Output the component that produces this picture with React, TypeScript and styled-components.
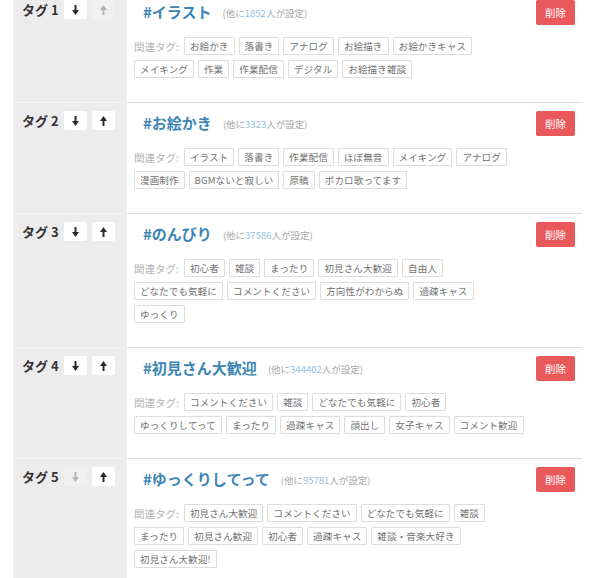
import styled, { createGlobalStyle } from 'styled-components';

const GlobalStyle = createGlobalStyle`
  html, body {
    margin: 0;
    padding: 0;
    background: #ffffff;
    overflow: hidden;
  }
  body {
    font-family: "Noto Sans CJK JP", "Liberation Sans", sans-serif;
    color: #333333;
  }
`;

type TagEntry = {
  name: string;
  count: number;
  related: string[][];
};

const TAGS: TagEntry[] = [
  {
    name: 'イラスト',
    count: 1852,
    related: [
      ['お絵かき', '落書き', 'アナログ', 'お絵描き', 'お絵かきキャス'],
      ['メイキング', '作業', '作業配信', 'デジタル', 'お絵描き雑談'],
    ],
  },
  {
    name: 'お絵かき',
    count: 3323,
    related: [
      ['イラスト', '落書き', '作業配信', 'ほぼ無音', 'メイキング', 'アナログ'],
      ['漫画制作', 'BGMないと寂しい', '原稿', 'ボカロ歌ってます'],
    ],
  },
  {
    name: 'のんびり',
    count: 37586,
    related: [
      ['初心者', '雑談', 'まったり', '初見さん大歓迎', '自由人'],
      ['どなたでも気軽に', 'コメントください', '方向性がわからぬ', '過疎キャス'],
      ['ゆっくり'],
    ],
  },
  {
    name: '初見さん大歓迎',
    count: 344402,
    related: [
      ['コメントください', '雑談', 'どなたでも気軽に', '初心者'],
      ['ゆっくりしてって', 'まったり', '過疎キャス', '顔出し', '女子キャス', 'コメント歓迎'],
    ],
  },
  {
    name: 'ゆっくりしてって',
    count: 95781,
    related: [
      ['初見さん大歓迎', 'コメントください', 'どなたでも気軽に', '雑談'],
      ['まったり', '初見さん歓迎', '初心者', '過疎キャス', '雑談・音楽大好き'],
      ['初見さん大歓迎!'],
    ],
  },
];

const List = styled.div`
  margin: -8px 18px 0 13px;
  display: flex;
  flex-direction: column;
`;

const Row = styled.div`
  display: grid;
  grid-template-columns: 114px minmax(0, 1fr);
`;

const Side = styled.div`
  background: #ececec;
  border-bottom: 1px solid #f4f4f4;
  padding: 8px 0 0 9px;
  display: flex;
  align-items: flex-start;
`;

const SideHead = styled.div`
  display: flex;
  align-items: center;
  height: 19px;
  gap: 5px;
`;

const TagNumber = styled.span`
  font-size: 13px;
  font-weight: 700;
  color: #333333;
  white-space: nowrap;
`;

const MoveButton = styled.button<{ $disabled?: boolean }>`
  width: 23px;
  height: 19px;
  padding: 0;
  border: none;
  border-radius: 2px;
  background: ${({ $disabled }) => ($disabled ? '#f0f0f0' : '#ffffff')};
  color: ${({ $disabled }) => ($disabled ? '#b4b4b4' : '#2b2b2b')};
  display: flex;
  align-items: center;
  justify-content: center;
`;

const Main = styled.div`
  border-bottom: 1px solid #dedede;
  padding: 8px 7px 24px 7px;
  display: grid;
  grid-template-columns: minmax(0, 1fr) 39px;
  column-gap: 13px;
  align-items: start;
`;

const Head = styled.div`
  display: flex;
  align-items: center;
  height: 23px;
  padding-left: 9px;
`;

const Title = styled.span`
  font-size: 15px;
  font-weight: 700;
  color: #3d86b3;
  white-space: nowrap;
`;

const Count = styled.span`
  margin-left: 11px;
  font-size: 9.5px;
  color: #a6a6a6;
  white-space: nowrap;
  padding-top: 2px;
`;

const CountNumber = styled.span`
  color: #93c1e2;
`;

const DeleteButton = styled.button`
  width: 39px;
  height: 25px;
  padding: 0;
  border: none;
  border-radius: 2px;
  background: #e9585a;
  color: #ffffff;
  font-family: inherit;
  font-size: 10.5px;
  line-height: 25px;
  grid-row: 1;
  grid-column: 2;
`;

const Related = styled.div`
  grid-column: 1 / span 2;
  margin-top: 12px;
  display: flex;
  flex-direction: column;
  gap: 5px;
`;

const RelatedLine = styled.div`
  display: flex;
  align-items: center;
  gap: 4px;
`;

const RelatedLabel = styled.span`
  font-size: 10.5px;
  color: #b3b3b3;
  white-space: nowrap;
  margin-right: 1px;
`;

const Chip = styled.span`
  height: 18px;
  box-sizing: border-box;
  padding: 0 5px;
  border: 1px solid #dddddd;
  border-radius: 1px;
  background: #ffffff;
  font-size: 9.5px;
  line-height: 16px;
  letter-spacing: 0.15px;
  color: #717171;
  white-space: nowrap;
`;

function Arrow({ up }: { up?: boolean }): JSX.Element {
  return (
    <svg
      width="7"
      height="10"
      viewBox="0 0 7 10"
      style={{ transform: up ? 'rotate(180deg)' : undefined }}
      aria-hidden="true"
    >
      <rect x="2.5" y="0" width="2" height="6" fill="currentColor" />
      <polygon points="0,5 7,5 3.5,10" fill="currentColor" />
    </svg>
  );
}

export default function App(): JSX.Element {
  return (
    <>
      <GlobalStyle />
      <List>
        {TAGS.map((tag, index) => (
          <Row key={tag.name}>
            <Side>
              <SideHead>
                <TagNumber>タグ {index + 1}</TagNumber>
                <MoveButton $disabled={index === TAGS.length - 1}>
                  <Arrow />
                </MoveButton>
                <MoveButton $disabled={index === 0}>
                  <Arrow up />
                </MoveButton>
              </SideHead>
            </Side>
            <Main>
              <Head>
                <Title>#{tag.name}</Title>
                <Count>
                  (他に<CountNumber>{tag.count}</CountNumber>人が設定)
                </Count>
              </Head>
              <DeleteButton>削除</DeleteButton>
              <Related>
                {tag.related.map((line, lineIndex) => (
                  <RelatedLine key={lineIndex}>
                    {lineIndex === 0 && <RelatedLabel>関連タグ:</RelatedLabel>}
                    {line.map((item, i) => (
                      <Chip key={`${item}-${i}`}>{item}</Chip>
                    ))}
                  </RelatedLine>
                ))}
              </Related>
            </Main>
          </Row>
        ))}
      </List>
    </>
  );
}
